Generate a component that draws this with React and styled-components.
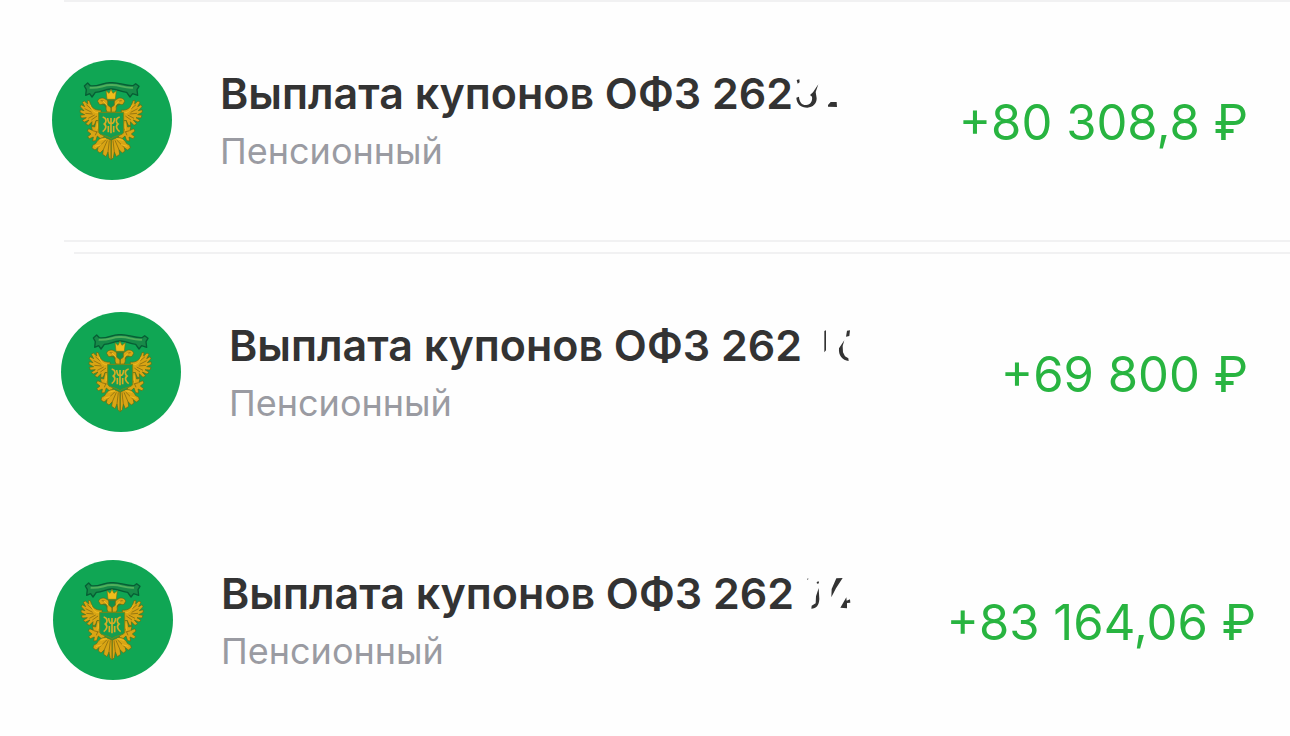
import styled, { createGlobalStyle } from "styled-components";

const GlobalStyle = createGlobalStyle`
  * {
    box-sizing: border-box;
  }
  body {
    margin: 0;
    background: #fefefe;
    font-family: Inter, "Liberation Sans", sans-serif;
  }
`;

const List = styled.main`
  display: flex;
  flex-direction: column;
  overflow: hidden;
`;

const Divider = styled.hr`
  height: 2px;
  margin: 0 0 0 ${(props) => props.$inset}px;
  border: 0;
  background: #f1f1f2;
`;

const Gap = styled.div`
  height: ${(props) => props.$size}px;
`;

const Row = styled.article`
  display: flex;
  align-items: center;
  padding: 58px ${(props) => props.$right}px ${(props) => props.$bottom}px ${(props) => props.$left}px;
`;

const Emblem = styled.svg`
  display: block;
  flex: none;
  width: 120px;
  height: 120px;
  margin-right: 48px;
`;

const Info = styled.div`
  flex: 1;
  min-width: 0;
  padding-top: 2px;
`;

const Title = styled.h2`
  display: flex;
  margin: 0;
  color: #333333;
  font-size: 43px;
  font-weight: 600;
  line-height: 60px;
  white-space: nowrap;
`;

const Traces = styled.svg`
  display: block;
  width: 70px;
  height: 60px;
  fill: #333333;
`;

const Account = styled.p`
  margin: 0;
  color: #9a9ba2;
  font-size: 36px;
  line-height: 56px;
`;

const Amount = styled.p`
  margin: 0;
  padding-top: 5px;
  color: #28b440;
  font-size: 49px;
  line-height: 60px;
  white-space: nowrap;
`;

// One half of the eagle, mirrored for the other side
const EagleHalf = () => (
  <g fill="#d9a514" stroke="#5d6b14" strokeWidth="2" strokeLinejoin="round">
    <path d="M183 180 C170 182 158 176 153 166 L148 152 L142 151 L143 162 L133 153 L127 157 L134 170 L124 164 L121 170 L132 182 L121 179 L120 187 L134 194 L121 196 L124 204 L139 203 L127 211 L133 216 L147 210 L137 222 L145 226 L156 215 L155 227 L163 225 L168 212 L183 214 Z" />
    <path d="M201 186 C195 175 201 168 195 163 C189 160 184 166 178 163 L173 154 C174 146 184 142 192 145 C202 149 205 157 213 160 L213 187 Z" />
    <path d="M168 212 L181 212 L180 240 L193 262 L183 268 L172 258 L167 272 L158 273 L160 261 L148 266 L143 260 L153 252 L142 243 L146 236 L157 241 L154 229 L164 231 Z" />
    <path d="M193 262 C181 262 171 272 168 280 L158 286 L156 294 L165 300 L174 293 L172 303 L180 309 L190 299 L188 313 L198 320 L204 306 L207 323 L213 329 L213 270 Z" />
    <g fill="none" stroke="#775f0e" strokeWidth="2">
      <path d="M139 164 L155 178 M134 176 L155 187 M136 190 L158 192 M145 205 L164 195 M154 210 L171 198" />
      <path d="M197 270 L174 293 M202 271 L190 299 M208 271 L204 306" />
      <path d="M182 152 L191 153 M187 162 L200 171 M158 242 L173 246 M166 256 L174 236" />
    </g>
    <path fill="none" stroke="#f1bd20" strokeWidth="3" d="M150 164 C155 183 167 191 178 187 M189 153 L205 169 M178 271 L198 266 M172 220 L171 244 M165 289 L184 284" />
  </g>
);

const TreasuryEmblem = () => (
  <Emblem viewBox="36 30 360 360" aria-hidden="true">
    <circle cx="216" cy="210" r="180" fill="#10a654" />
    <EagleHalf />
    <g transform="translate(427 0) scale(-1 1)">
      <EagleHalf />
    </g>
    <path d="M133 108 L143 99 L151 107 C174 111 190 96 213 98 C236 96 258 109 279 107 L287 101 L297 109 L291 119 L293 136 L278 131 L270 141 L260 127 C239 126 231 116 213 117 C195 116 186 127 166 127 L156 141 L149 131 L137 136 L139 119 Z" fill="#178a48" stroke="#075e35" strokeWidth="4" strokeLinejoin="round" />
    <path d="M149 113 C176 117 190 104 213 105 C237 103 253 116 279 113" fill="none" stroke="#51ae5b" strokeWidth="6" />
    <path d="M198 122 L207 130 L213 118 L219 130 L229 122 L226 148 L201 148 Z" fill="#efbd1b" stroke="#6f7414" strokeWidth="2" />
    <path d="M203 151 L223 151 L223 166 L213 173 L203 166 Z" fill="#149149" stroke="#756c12" strokeWidth="2" />
    <path d="M176 187 L251 187 L251 245 C251 257 230 254 213 266 C197 254 176 257 176 245 Z" fill="#149d4f" stroke="#7b8714" strokeWidth="3" />
    <path d="M188 201 C202 205 199 218 193 222 C202 229 196 240 188 245 M239 201 C225 205 228 218 234 222 C225 229 231 240 239 245 M203 204 C204 217 208 221 213 220 C219 221 223 217 224 204 M213 204 L213 250 M205 228 L205 247 M221 228 L221 247" fill="none" stroke="#d7ad24" strokeWidth="5" />
  </Emblem>
);

const payments = [
  {
    left: 52,
    right: 42,
    bottom: 60,
    amount: "+80 308,8 ₽",
    traces: "M11 51 L19 49 L20 58 L14 62 Z M10 104 L18 101 C19 118 28 127 40 126 C52 125 59 115 57 101 L51 96 L60 88 L76 64 L68 87 L71 106 C71 122 60 133 43 134 C24 134 11 123 10 104 Z M105 126 L113 117 L131 117 L132 132 L105 131 Z",
  },
  {
    left: 61,
    right: 42,
    bottom: 60,
    amount: "+69 800 ₽",
    traces: "M67 48 L72 46 L72 106 L67 112 Z M135 47 L144 46 L142 63 L132 65 Z M111 100 L127 76 L122 93 L123 112 L129 124 L139 130 L140 138 C121 137 109 121 111 100 Z",
  },
  {
    left: 53,
    right: 34,
    bottom: 56,
    amount: "+83 164,06 ₽",
    traces: "M39 48 L43 46 L42 51 Z M68 57 L74 55 L75 61 L69 62 Z M74 75 L76 108 C75 127 67 137 52 137 L53 128 L65 121 L66 100 Z M127 46 L146 45 L126 76 L112 103 L113 78 Z M139 134 L157 103 L158 113 L168 109 L169 119 L159 120 L159 136 Z",
  },
];

const Payment = ({ payment }) => (
  <Row $left={payment.left} $right={payment.right} $bottom={payment.bottom}>
    <TreasuryEmblem />
    <Info>
      <Title>
        Выплата купонов ОФЗ 262
        <Traces viewBox="0 0 210 180" aria-hidden="true">
          <path d={payment.traces} />
        </Traces>
      </Title>
      <Account>Пенсионный</Account>
    </Info>
    <Amount>{payment.amount}</Amount>
  </Row>
);

const App = () => {
  return (
    <>
      <GlobalStyle />
      <List>
        <Divider $inset={64} />
        <Payment payment={payments[0]} />
        <Divider $inset={64} />
        <Gap $size={10} />
        <Divider $inset={74} />
        <Payment payment={payments[1]} />
        <Gap $size={10} />
        <Payment payment={payments[2]} />
      </List>
    </>
  );
};

export default App;
